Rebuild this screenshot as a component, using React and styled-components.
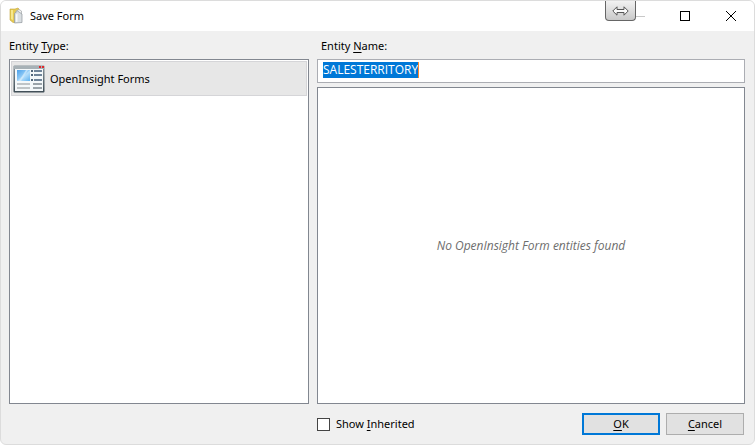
import { useEffect, useRef, useState } from "react";
import styled, { createGlobalStyle } from "styled-components";

function FolderIcon() {
  return (
    <svg width="16" height="18" viewBox="0 0 16 18" aria-hidden="true">
      <path d="M1 2h5l3-1 1 1v5l-4 8.500H4L1 13z" fill="#e6cb52" stroke="#c4a53e" strokeWidth=".6" />
      <path d="M2 3h2v10l-2-1z" fill="#f6e88c" />
      <path d="M7 4l3-1.500 2.500 1.500v10L7 15z" fill="#f4f4f2" stroke="#a4a8aa" strokeWidth=".7" />
      <path d="M5.500 6.500 8.500 4l4.500 3v8.500l-7.500.5z" fill="#d9dee1" stroke="#8f979c" strokeWidth=".7" />
      <path d="M7 7.500 8.500 6.500V15H7z" fill="#f8f9fa" />
    </svg>
  );
}

function FormIcon() {
  return (
    <svg width="32" height="28" viewBox="0 0 32 28" aria-hidden="true">
      <defs>
        <linearGradient id="frame" x1="0" y1="0" x2="0" y2="1">
          <stop offset="0" stopColor="#8b979e" />
          <stop offset="1" stopColor="#3f4d56" />
        </linearGradient>
        <linearGradient id="photo" x1="0" y1="0" x2="1" y2="1">
          <stop offset="0" stopColor="#4aa0ea" />
          <stop offset=".45" stopColor="#8cc8f6" />
          <stop offset=".55" stopColor="#b9e0fb" />
          <stop offset="1" stopColor="#5cb0ef" />
        </linearGradient>
      </defs>
      <rect x=".5" y=".5" width="31" height="27" rx="1" fill="url(#frame)" />
      <rect x="1" y="1" width="30" height="3" fill="#a7b1b6" />
      <rect x="26" y="1" width="2" height="2" fill="#e0282b" />
      <rect x="29" y="1" width="2" height="2" fill="#e0282b" />
      <rect x="2" y="4" width="28" height="22" fill="#f4f8fa" />
      <rect x="4" y="5" width="13" height="11" fill="url(#photo)" />
      <path d="M6 16 13 5h2L8 16z" fill="#d5edfc" opacity=".7" />
      <path d="M18 5h2v2h-2zM18 9h2v2h-2zM18 14h2v2h-2z" fill="#50667a" />
      <path d="M21 5h8v2h-8zM21 9h8v2h-8zM21 14h8v2h-8z" fill="#6f8499" />
      <path d="M4 18h13v2H4zM4 22h13v2H4z" fill="#bfc4c7" />
      <path d="M20 18h9v2h-9zM20 22h9v2h-9z" fill="#9aa3a9" />
    </svg>
  );
}

function ArrowsIcon() {
  return (
    <svg width="17" height="10" viewBox="0 0 17 10" aria-hidden="true">
      <path
        d="M.8 5 5 .8v2.700h7V.8L16.200 5 12 9.200V6.500H5v2.700z"
        fill="#fafafa"
        stroke="#555"
      />
    </svg>
  );
}

function App() {
  const nameRef = useRef(null);
  const [name, setName] = useState("SALESTERRITORY");
  const [inherited, setInherited] = useState(false);

  useEffect(() => {
    nameRef.current.focus();
    nameRef.current.select();
  }, []);

  return (
    <Dialog>
      <GlobalStyle />
      <TitleBar>
        <FolderIcon />
        <Title>Save Form</Title>
        <DockTab type="button" aria-label="Dock">
          <ArrowsIcon />
        </DockTab>
        <MinimizeButton type="button" aria-label="Minimize" />
        <WindowButton type="button" aria-label="Maximize">
          <svg width="10" height="10" viewBox="0 0 10 10" aria-hidden="true">
            <rect x=".5" y=".5" width="9" height="9" fill="none" stroke="#000" />
          </svg>
        </WindowButton>
        <WindowButton type="button" aria-label="Close">
          <svg width="10" height="10" viewBox="0 0 10 10" aria-hidden="true">
            <path d="M0 0l10 10M10 0L0 10" stroke="#000" />
          </svg>
        </WindowButton>
      </TitleBar>
      <Body>
        <Column>
          <Label as="span" id="entity-type">
            Entity <u>T</u>ype:
          </Label>
          <Panel role="listbox" aria-labelledby="entity-type">
            <TypeOption type="button" role="option" aria-selected="true">
              <FormIcon />
              OpenInsight Forms
            </TypeOption>
          </Panel>
        </Column>
        <Column>
          <Label $inset htmlFor="entity-name">
            Entity <u>N</u>ame:
          </Label>
          <Field>
            <NameInput
              id="entity-name"
              ref={nameRef}
              value={name}
              spellCheck={false}
              onChange={(e) => setName(e.target.value)}
            />
          </Field>
          <Panel $centered>
            <Empty>No OpenInsight Form entities found</Empty>
          </Panel>
        </Column>
        <Actions>
          <CheckLabel>
            <Checkbox
              type="checkbox"
              checked={inherited}
              onChange={(e) => setInherited(e.target.checked)}
            />
            <span>
              Show <u>I</u>nherited
            </span>
          </CheckLabel>
          <Button type="submit" $primary>
            <u>O</u>K
          </Button>
          <Button type="button">
            <u>C</u>ancel
          </Button>
        </Actions>
      </Body>
    </Dialog>
  );
}

const GlobalStyle = createGlobalStyle`
  * {
    box-sizing: border-box;
  }

  body {
    margin: 0;
    background: #fff;
  }

  body, button, input {
    font-family: "Noto Sans", "Open Sans", sans-serif;
    font-size: 11px;
    line-height: 16px;
    color: #000;
  }

  u {
    text-underline-offset: 2px;
  }
`;

const Dialog = styled.form`
  min-height: 100vh;
  display: flex;
  flex-direction: column;
  background: #f0f0f0;
  border: 1px solid #dcdcdc;
  border-radius: 6px;
  overflow: hidden;
`;

const TitleBar = styled.header`
  height: 30px;
  padding-left: 8px;
  display: flex;
  align-items: center;
  background: #fff;
`;

const Title = styled.h1`
  flex: 1;
  margin: 0;
  padding-left: 5px;
  font-size: 11px;
  font-weight: 400;
`;

const DockTab = styled.button`
  width: 31px;
  height: 20px;
  padding: 0;
  align-self: flex-start;
  display: flex;
  align-items: center;
  justify-content: center;
  background: linear-gradient(#f2f2f2, #c9c9c9);
  border: 1px solid #666;
  border-top: 0;
  border-radius: 0 0 4px 4px;
`;

const MinimizeButton = styled.button`
  width: 26px;
  height: 28px;
  padding: 0;
  background: none;
  border: 0;

  &::before {
    content: "";
    display: block;
    width: 9px;
    height: 1px;
    background: #c8c8c8;
  }
`;

const WindowButton = styled.button`
  width: 46px;
  height: 28px;
  padding: 0;
  display: flex;
  align-items: center;
  justify-content: center;
  background: none;
  border: 0;
`;

const Body = styled.div`
  flex: 1;
  display: grid;
  grid-template-columns: 300fr 428fr;
  grid-template-rows: 1fr auto;
  column-gap: 8px;
  row-gap: 9px;
  padding: 7px 9px 9px 8px;
`;

const Column = styled.div`
  display: flex;
  flex-direction: column;
  gap: 4px;
`;

const Label = styled.label`
  display: block;
  padding-left: ${(p) => (p.$inset ? "4px" : "0")};
  margin-bottom: 1px;
`;

const Panel = styled.div`
  flex: 1;
  padding: 1px;
  display: flex;
  flex-direction: column;
  justify-content: ${(p) => (p.$centered ? "center" : "flex-start")};
  background: #fff;
  border: 1px solid #828790;
`;

const TypeOption = styled.button`
  height: 35px;
  padding: 0 1px;
  display: flex;
  align-items: center;
  gap: 5px;
  background: #e7e7e7;
  border: 1px solid #d5d5d8;
  text-align: left;
`;

const Field = styled.div`
  height: 24px;
  padding: 0 5px 2px;
  display: flex;
  align-items: center;
  background: #fff;
  border: 1px solid #abadb3;
`;

const NameInput = styled.input`
  field-sizing: content;
  height: 16px;
  padding: 0;
  background: none;
  border: 0;
  border-right: 1px solid #ff8728;
  outline: 0;
  font-family: "Open Sans", sans-serif;
  font-size: 12px;

  &::selection {
    background: #0078d7;
    color: #fff;
  }
`;

const Empty = styled.p`
  margin: 0;
  font-family: "Open Sans", sans-serif;
  font-size: 12px;
  font-style: italic;
  text-align: center;
  color: #6d6d6d;
`;

const Actions = styled.footer`
  grid-column: 2;
  padding-right: 1px;
  display: flex;
  align-items: center;
  gap: 6px;
`;

const CheckLabel = styled.label`
  flex: 1;
  display: flex;
  align-items: center;
  gap: 6px;
`;

const Checkbox = styled.input`
  appearance: none;
  width: 13px;
  height: 13px;
  margin: 0;
  background: #fff;
  border: 1px solid #444;

  &:checked {
    background: #0078d7;
  }
`;

const Button = styled.button`
  width: 78px;
  height: 22px;
  padding: 0;
  background: #e1e1e1;
  border: ${(p) => (p.$primary ? "2px solid #0078d7" : "1px solid #adadad")};
`;

export default App;
